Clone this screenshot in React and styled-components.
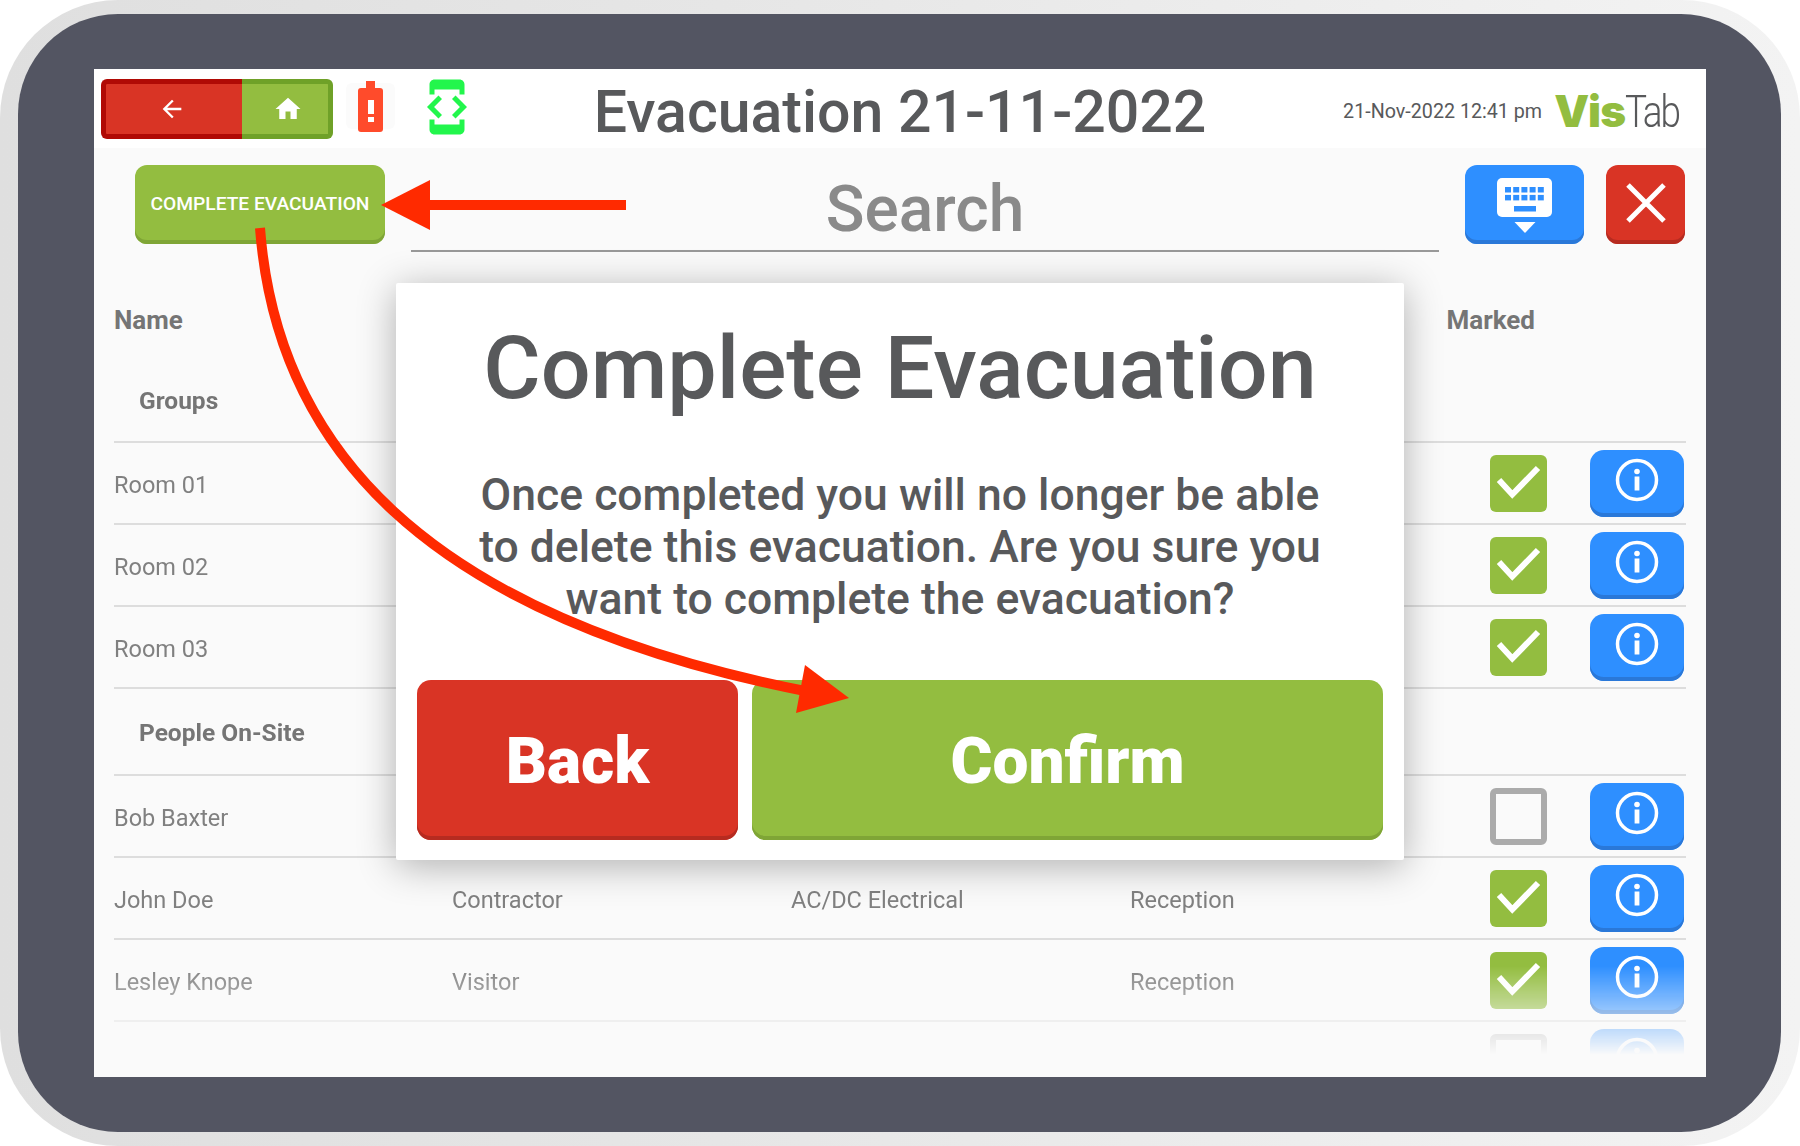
import styled, { createGlobalStyle } from "styled-components";
import { MdArrowBack, MdHome, MdDeveloperMode } from "react-icons/md";

const GlobalStyle = createGlobalStyle`
  html, body {
    margin: 0;
    padding: 0;
    background: #fff;
  }
  * {
    box-sizing: border-box;
  }
`;

const Outer = styled.div`
  position: relative;
  width: 1800px;
  height: 1146px;
  padding: 14px 19px 14px 18px;
  border-radius: 118px;
  background: linear-gradient(90deg, #dfdfdf 0%, #e6e6e6 40%, #f3f3f3 100%);
  font-family: Roboto, "Liberation Sans", sans-serif;
`;

const Bezel = styled.div`
  width: 100%;
  height: 100%;
  padding: 55px 75px 55px 76px;
  border-radius: 100px;
  background: #535562;
`;

const Screen = styled.div`
  position: relative;
  display: flex;
  flex-direction: column;
  width: 100%;
  height: 100%;
  padding-bottom: 22px;
  background: #fafafa;
`;

const Header = styled.header`
  display: grid;
  grid-template-columns: minmax(0, 1fr) auto minmax(0, 1fr);
  align-items: flex-start;
  flex: none;
  height: 79px;
  padding: 10px 7px 0;
  background: #fff;
`;

const HeaderLeft = styled.div`
  display: flex;
  align-items: flex-start;
`;

const HeaderRight = styled.div`
  display: flex;
  justify-content: flex-end;
  align-items: center;
  gap: 12px;
  height: 54px;
  margin-top: 5px;
  padding-right: 18px;
`;

const NavBack = styled.div`
  display: flex;
  align-items: center;
  justify-content: center;
  width: 141px;
  height: 60px;
  padding-right: 5px;
  color: #fff;
  background: #d93425;
  border: 5px solid #b00a05;
  border-right: none;
  border-radius: 6px 0 0 6px;
`;

const NavHome = styled(NavBack)`
  width: 91px;
  padding: 0 0 0 5px;
  background: #93bd40;
  border: 5px solid #6fa128;
  border-left: none;
  border-radius: 0 6px 6px 0;
`;

const BatteryBox = styled.div`
  display: flex;
  flex: none;
  margin: 4px 0 0 13px;
  padding: 0 12px;
  height: 46px;
  background: #fbfbfb;
  border-radius: 6px;
`;

const BatteryGlyph = styled.svg`
  margin-top: -2px;
`;

const DevIcon = styled.div`
  display: flex;
  margin: -2px 0 0 22px;
  color: #22f64c;
`;

const Title = styled.h1`
  margin: 0;
  padding-top: 1px;
  font-size: 59px;
  line-height: 64px;
  font-weight: 500;
  color: #58595b;
  white-space: nowrap;
`;

const DateText = styled.span`
  font-size: 19.7px;
  font-weight: 400;
  color: #58595b;
  white-space: nowrap;
`;

const Logo = styled.div`
  display: flex;
  align-items: baseline;
  line-height: 54px;
`;

const LogoVis = styled.span`
  font-family: Inter, Roboto, sans-serif;
  font-size: 44px;
  font-weight: 900;
  color: #93bd40;
  letter-spacing: -1px;
`;

const LogoTab = styled.span`
  display: inline-block;
  margin: 0 2px 0 -12px;
  font-size: 45px;
  font-weight: 300;
  color: #58595b;
  letter-spacing: -2.5px;
  transform: scaleX(0.82);
  transform-origin: right;
`;

const Toolbar = styled.div`
  display: flex;
  align-items: flex-start;
  flex: none;
  padding: 17px 21px 0 41px;
  height: 132px;
`;

const ActionButton = styled.button`
  display: flex;
  align-items: center;
  justify-content: center;
  flex: none;
  width: ${(p) => p.$w}px;
  height: ${(p) => p.$h || 79}px;
  padding: 0 0 ${(p) => p.$pb ?? 4}px;
  border: none;
  border-radius: ${(p) => p.$radius || 12}px;
  color: #fff;
  font-family: inherit;
  background: ${(p) => p.$bg};
  box-shadow: inset 0 -4px 0 ${(p) => p.$edge};
`;

const CompleteLabel = styled.span`
  font-size: 19.2px;
  font-weight: 500;
  padding-top: 2px;
`;

const SearchBox = styled.div`
  flex: 1;
  height: 87px;
  margin: 0 26px;
  border-bottom: 2px solid #999;
  text-align: center;
  font-size: 64px;
  line-height: 90px;
  font-weight: 500;
  color: #8a8a8a;
`;

const CloseGap = styled.div`
  width: 22px;
  flex: none;
`;

const TableHead = styled.div`
  display: flex;
  justify-content: space-between;
  align-items: center;
  flex: none;
  height: 81px;
  margin: 0 20px;
  padding: 0 151px 2px 0;
  font-size: 26px;
  font-weight: 700;
  color: #757575;
`;

const List = styled.div`
  flex: 1;
  min-height: 0;
  overflow: hidden;
  margin: 0 20px;
  mask-image: linear-gradient(to bottom, #000 605px, transparent 694px);
`;

const SectionRow = styled.div`
  display: flex;
  align-items: center;
  height: ${(p) => p.$h}px;
  padding: ${(p) => p.$pt}px 0 ${(p) => p.$pb}px 25px;
  border-bottom: 2px solid #ddd;
  font-size: 24.5px;
  font-weight: 700;
  color: #757575;
`;

const Row = styled.div`
  display: grid;
  grid-template-columns: 338px 339px 339px 360px 100px 96px;
  align-items: center;
  height: 82px;
  border-bottom: 2px solid #ddd;
  font-size: 23.5px;
  color: #808080;
`;

const Cell = styled.div`
  padding-top: 3px;
  white-space: nowrap;
`;

const Check = styled.div`
  width: 57px;
  height: 57px;
  border-radius: 6px;
  background: ${(p) => (p.$on ? "#93bd40" : "transparent")};
  border: ${(p) => (p.$on ? "none" : "6px solid #ababab")};
`;

const Modal = styled.div`
  position: absolute;
  left: 302px;
  top: 214px;
  display: flex;
  flex-direction: column;
  align-items: center;
  width: 1008px;
  height: 577px;
  padding: 30px 21px 20px;
  background: #fff;
  border-radius: 2px;
  box-shadow: 0 6px 38px rgba(0, 0, 0, 0.3);
`;

const ModalTitle = styled.h2`
  margin: 0;
  font-size: 88px;
  line-height: 110px;
  font-weight: 500;
  color: #58595b;
  white-space: nowrap;
`;

const ModalText = styled.p`
  margin: 46px 0 0;
  font-size: 44.5px;
  line-height: 52px;
  font-weight: 500;
  text-align: center;
  color: #58595b;
`;

const ModalButtons = styled.div`
  display: flex;
  gap: 14px;
  width: 100%;
  margin-top: auto;
`;

const BigLabel = styled.span`
  padding-top: 2px;
  font-size: 64px;
  font-weight: 900;
`;

const Arrows = styled.svg`
  position: absolute;
  left: 0;
  top: 0;
  pointer-events: none;
`;

function InfoIcon() {
  return (
    <svg width="46" height="46" viewBox="0 0 46 46" fill="none">
      <circle cx="23" cy="23" r="19.5" stroke="#fff" strokeWidth="3.5" />
      <circle cx="23" cy="14.5" r="2.8" fill="#fff" />
      <rect x="20.6" y="19.5" width="4.8" height="14" fill="#fff" />
    </svg>
  );
}

function TickIcon() {
  return (
    <svg width="57" height="57" viewBox="0 0 57 57" fill="none">
      <polyline points="9,25 22.3,39.5 48,13" stroke="#fff" strokeWidth="6" />
    </svg>
  );
}

function BatteryIcon() {
  return (
    <BatteryGlyph width="25" height="52" viewBox="0 0 25 52">
      <rect x="8" y="0" width="9" height="10" fill="#ff4b2b" />
      <rect x="0" y="7" width="25" height="44" rx="3" fill="#ff4b2b" />
      <rect x="10" y="19" width="6" height="14" fill="#fff" />
      <rect x="10" y="36" width="6" height="5" fill="#fff" />
    </BatteryGlyph>
  );
}

function KeyboardIcon() {
  const keys = [];
  for (let r = 0; r < 2; r++) {
    for (let c = 0; c < 5; c++) {
      keys.push(<rect key={`${r}-${c}`} x={10 + c * 8.2} y={12 + r * 7.9} width="6" height="5.5" fill="#2e8fff" />);
    }
  }
  return (
    <svg width="60" height="60" viewBox="0 0 60 60">
      <rect x="2" y="3" width="55" height="39" rx="5" fill="#fff" />
      {keys}
      <rect x="19" y="31" width="22" height="5.5" fill="#2e8fff" />
      <polygon points="19.5,47 40.5,47 30,58" fill="#fff" />
    </svg>
  );
}

function CloseIcon() {
  return (
    <svg width="42" height="42" viewBox="0 0 42 42" fill="none">
      <path d="M3 3 L39 39 M39 3 L3 39" stroke="#fff" strokeWidth="5" />
    </svg>
  );
}

function ListRow({ name, type, company, location, checked }) {
  return (
    <Row>
      <Cell>{name}</Cell>
      <Cell>{type}</Cell>
      <Cell>{company}</Cell>
      <Cell>{location}</Cell>
      <Check $on={checked}>{checked && <TickIcon />}</Check>
      <ActionButton $w={94} $h={67} $radius={14} $pb={7} $bg="#2e8fff" $edge="#2a78d8">
        <InfoIcon />
      </ActionButton>
    </Row>
  );
}

export default function App() {
  return (
    <Outer>
      <GlobalStyle />
      <Bezel>
        <Screen>
          <Header>
            <HeaderLeft>
              <NavBack>
                <MdArrowBack size={28} />
              </NavBack>
              <NavHome>
                <MdHome size={30} />
              </NavHome>
              <BatteryBox>
                <BatteryIcon />
              </BatteryBox>
              <DevIcon>
                <MdDeveloperMode size={60} />
              </DevIcon>
            </HeaderLeft>
            <Title>Evacuation 21-11-2022</Title>
            <HeaderRight>
              <DateText>21-Nov-2022 12:41 pm</DateText>
              <Logo>
                <LogoVis>Vis</LogoVis>
                <LogoTab>Tab</LogoTab>
              </Logo>
            </HeaderRight>
          </Header>

          <Toolbar>
            <ActionButton $w={250} $bg="#93bd40" $edge="#7fa536">
              <CompleteLabel>COMPLETE EVACUATION</CompleteLabel>
            </ActionButton>
            <SearchBox>Search</SearchBox>
            <ActionButton $w={119} $pb={0} $bg="#2e8fff" $edge="#2a78d8">
              <KeyboardIcon />
            </ActionButton>
            <CloseGap />
            <ActionButton $w={79} $bg="#d93425" $edge="#b62b20">
              <CloseIcon />
            </ActionButton>
          </Toolbar>

          <TableHead>
            <span>Name</span>
            <span>Marked</span>
          </TableHead>

          <List>
            <SectionRow $h={82} $pt={0} $pb={2}>Groups</SectionRow>
            <ListRow name="Room 01" checked />
            <ListRow name="Room 02" checked />
            <ListRow name="Room 03" checked />
            <SectionRow $h={87} $pt={2} $pb={0}>People On-Site</SectionRow>
            <ListRow name="Bob Baxter" />
            <ListRow name="John Doe" type="Contractor" company="AC/DC Electrical" location="Reception" checked />
            <ListRow name="Lesley Knope" type="Visitor" location="Reception" checked />
            <ListRow />
          </List>

          <Modal>
            <ModalTitle>Complete Evacuation</ModalTitle>
            <ModalText>
              Once completed you will no longer be able
              <br />
              to delete this evacuation. Are you sure you
              <br />
              want to complete the evacuation?
            </ModalText>
            <ModalButtons>
              <ActionButton $w={321} $h={160} $radius={14} $pb={0} $bg="#d93425" $edge="#b62b20">
                <BigLabel>Back</BigLabel>
              </ActionButton>
              <ActionButton $w={631} $h={160} $radius={14} $pb={0} $bg="#93bd40" $edge="#7fa536">
                <BigLabel>Confirm</BigLabel>
              </ActionButton>
            </ModalButtons>
          </Modal>
        </Screen>
      </Bezel>

      <Arrows width="1800" height="1146" viewBox="0 0 1800 1146" fill="none">
        <path d="M626 205 H425" stroke="#ff2a00" strokeWidth="10" />
        <polygon points="430,180 381,205 430,230" fill="#ff2a00" />
        <path d="M260 228 C276 440 415 615 810 692" stroke="#ff2a00" strokeWidth="10" />
        <polygon points="805,665 849,698 796,713" fill="#ff2a00" />
      </Arrows>
    </Outer>
  );
}
